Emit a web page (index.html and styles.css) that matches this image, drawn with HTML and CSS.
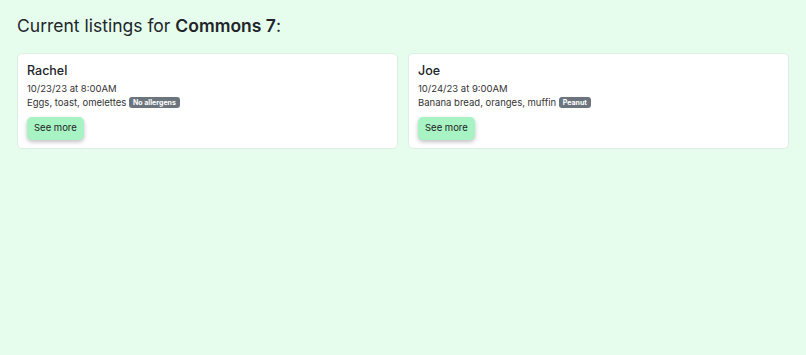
FILE: index.html
```html
<!DOCTYPE html>
<html>
<head>
<meta charset="utf-8">
<link rel="stylesheet" href="styles.css">
</head>
<body>
<main class="page">
  <h1 class="title">Current listings for <strong>Commons 7</strong>:</h1>
  <div class="grid">
    <div class="card">
      <h2 class="name">Rachel</h2>
      <div class="line">10/23/23 at 8:00AM</div>
      <div class="line">Eggs, toast, omelettes <span class="badge">No allergens</span></div>
      <button class="btn">See more</button>
    </div>
    <div class="card">
      <h2 class="name">Joe</h2>
      <div class="line">10/24/23 at 9:00AM</div>
      <div class="line">Banana bread, oranges, muffin <span class="badge">Peanut</span></div>
      <button class="btn">See more</button>
    </div>
  </div>
</main>
</body>
</html>
```
FILE: styles.css
```css
html, body {
  margin: 0;
  padding: 0;
  background: #e6fdee;
  font-family: "Inter", "Lato", sans-serif;
  color: #212529;
}
.page {
  padding: 13px 17px;
}
.title {
  margin: 0 0 14px 0;
  font-size: 17.5px;
  font-weight: 400;
  line-height: 26px;
}
.title strong {
  font-weight: 600;
}
.grid {
  display: grid;
  grid-template-columns: 1fr 1fr;
  gap: 10px;
}
.card {
  background: #fff;
  border: 1px solid #dfeee5;
  border-radius: 5px;
  padding: 8px 9px 8px 9px;
}
.name {
  margin: 0 0 3px 0;
  font-size: 12.5px;
  font-weight: 500;
  line-height: 17px;
}
.line {
  font-size: 9.5px;
  line-height: 13.5px;
  color: #333;
}
.badge {
  display: inline-block;
  background: #6c757d;
  color: #fff;
  font-size: 7px;
  font-weight: 700;
  border-radius: 3px;
  padding: 1px 4px;
  line-height: 9px;
  vertical-align: 1px;
}
.btn {
  margin-top: 8px;
  font-family: inherit;
  font-size: 9.5px;
  color: #222;
  background: #a7f3c4;
  border: none;
  border-radius: 5px;
  padding: 5px 7px 6px;
  box-shadow: 0 2px 4px rgba(0,0,0,0.25);
  line-height: 12px;
}
```
